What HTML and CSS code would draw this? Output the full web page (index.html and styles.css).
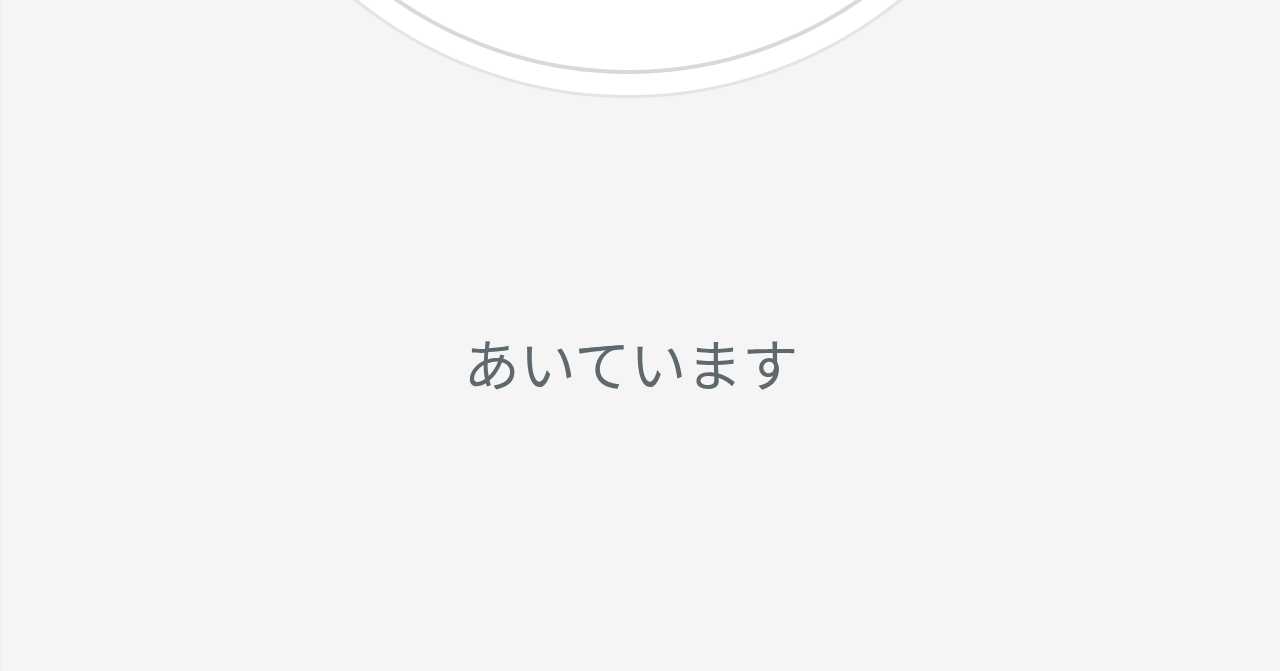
FILE: index.html
```html
<!DOCTYPE html>
<html lang="ja">
<head>
<meta charset="utf-8">
<link rel="stylesheet" href="styles.css">
</head>
<body>
<main class="screen">
  <div class="dial">
    <div class="dial-inner"></div>
  </div>
  <p class="status">あいています</p>
</main>
</body>
</html>
```
FILE: styles.css
```css
html, body {
  margin: 0;
  padding: 0;
  background: #f5f5f5;
}
.screen {
  width: 1280px;
  height: 671px;
  overflow: hidden;
  display: flex;
  flex-direction: column;
  background: #f5f5f5;
  border-left: 2px solid #efefef;
  box-sizing: border-box;
}
.dial {
  flex: none;
  box-sizing: border-box;
  width: 866px;
  height: 866px;
  margin: -768px 0 0 193px;
  border-radius: 50%;
  border: 3px solid #e4e4e4;
  background: #ffffff;
  padding: 21px;
  box-shadow: 0 0 2px rgba(0,0,0,0.04);
}
.dial-inner {
  box-sizing: border-box;
  width: 100%;
  height: 100%;
  border-radius: 50%;
  border: 4px solid #d9d9d9;
  background: #ffffff;
}
.status {
  margin: 231px 0 0 0;
  padding: 0 20px 0 0;
  text-align: center;
  font-family: "Noto Sans CJK JP", "Noto Sans", sans-serif;
  font-size: 56px;
  line-height: 66px;
  font-weight: 400;
  color: #5e686d;
}
```
